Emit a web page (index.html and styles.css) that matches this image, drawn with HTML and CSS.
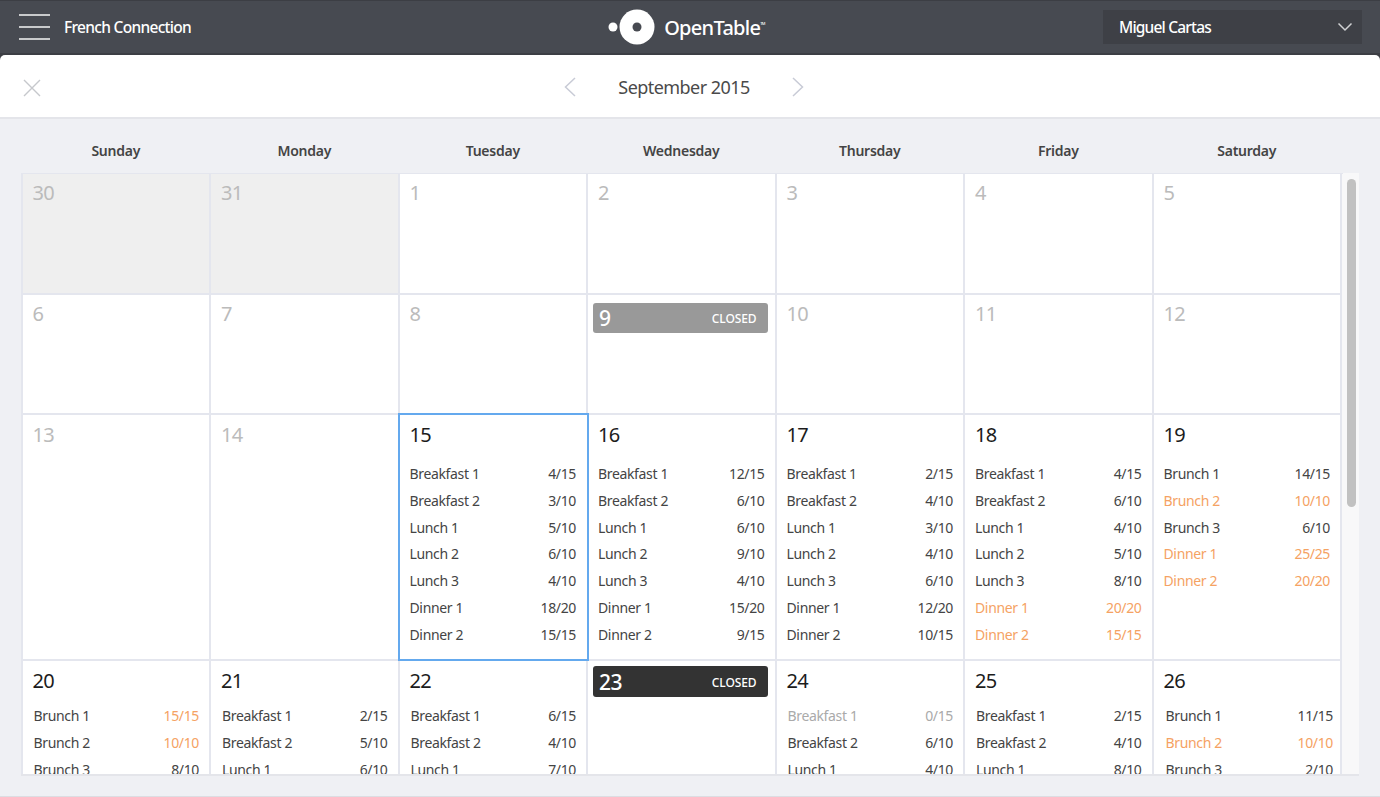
FILE: index.html
```html
<!DOCTYPE html>
<html>
<head>
    <title>French Connection - Calendar</title>
    <link rel="stylesheet" href="styles.css">
</head>
<body>
    <!-- Top bar -->
    <header class="topbar">
        <div class="topbar-left">
            <div class="burger"><span></span><span></span><span></span></div>
            <span class="restaurant">French Connection</span>
        </div>
        <div class="logo">
            <svg width="50" height="36" viewBox="0 0 50 36">
                <circle cx="6" cy="18" r="4.5" fill="#fff"/>
                <circle cx="30" cy="18" r="17.5" fill="#fff"/>
                <circle cx="30" cy="18" r="4.5" fill="#474a51"/>
            </svg>
            <span class="logo-text">OpenTable<sup class="tm">TM</sup></span>
        </div>
        <div class="user-select">
            <span>Miguel Cartas</span>
            <svg width="16" height="10" viewBox="0 0 16 10"><path d="M1.5 1.5 L8 8 L14.5 1.5" fill="none" stroke="#d0d1d4" stroke-width="1.5"/></svg>
        </div>
    </header>

    <!-- Month navigation -->
    <div class="month-bar">
        <svg class="close" width="18" height="18" viewBox="0 0 18 18"><path d="M1 1 L17 17 M17 1 L1 17" fill="none" stroke="#c6c8cc" stroke-width="1.4"/></svg>
        <svg class="arrow" width="12" height="20" viewBox="0 0 12 20"><path d="M11 1 L1.5 10 L11 19" fill="none" stroke="#c8cbd6" stroke-width="1.5"/></svg>
        <span class="month-title">September 2015</span>
        <svg class="arrow" width="12" height="20" viewBox="0 0 12 20"><path d="M1 1 L10.5 10 L1 19" fill="none" stroke="#c8cbd6" stroke-width="1.5"/></svg>
    </div>

    <!-- Calendar -->
    <div class="weekdays">
        <div>Sunday</div><div>Monday</div><div>Tuesday</div><div>Wednesday</div><div>Thursday</div><div>Friday</div><div>Saturday</div>
    </div>

    <div class="calendar-wrap">
        <div class="calendar">
            <div class="cell other"><div class="num muted">30</div></div>
            <div class="cell other"><div class="num muted">31</div></div>
            <div class="cell"><div class="num muted">1</div></div>
            <div class="cell"><div class="num muted">2</div></div>
            <div class="cell"><div class="num muted">3</div></div>
            <div class="cell"><div class="num muted">4</div></div>
            <div class="cell"><div class="num muted">5</div></div>

            <div class="cell"><div class="num muted">6</div></div>
            <div class="cell"><div class="num muted">7</div></div>
            <div class="cell"><div class="num muted">8</div></div>
            <div class="cell"><div class="closed grey"><span>9</span><small>CLOSED</small></div></div>
            <div class="cell"><div class="num muted">10</div></div>
            <div class="cell"><div class="num muted">11</div></div>
            <div class="cell"><div class="num muted">12</div></div>

            <div class="cell"><div class="num muted">13</div></div>
            <div class="cell"><div class="num muted">14</div></div>
            <div class="cell selected">
                <div class="num">15</div>
                <ul class="shifts">
                    <li><span>Breakfast 1</span><span>4/15</span></li>
                    <li><span>Breakfast 2</span><span>3/10</span></li>
                    <li><span>Lunch 1</span><span>5/10</span></li>
                    <li><span>Lunch 2</span><span>6/10</span></li>
                    <li><span>Lunch 3</span><span>4/10</span></li>
                    <li><span>Dinner 1</span><span>18/20</span></li>
                    <li><span>Dinner 2</span><span>15/15</span></li>
                </ul>
            </div>
            <div class="cell">
                <div class="num">16</div>
                <ul class="shifts">
                    <li><span>Breakfast 1</span><span>12/15</span></li>
                    <li><span>Breakfast 2</span><span>6/10</span></li>
                    <li><span>Lunch 1</span><span>6/10</span></li>
                    <li><span>Lunch 2</span><span>9/10</span></li>
                    <li><span>Lunch 3</span><span>4/10</span></li>
                    <li><span>Dinner 1</span><span>15/20</span></li>
                    <li><span>Dinner 2</span><span>9/15</span></li>
                </ul>
            </div>
            <div class="cell">
                <div class="num">17</div>
                <ul class="shifts">
                    <li><span>Breakfast 1</span><span>2/15</span></li>
                    <li><span>Breakfast 2</span><span>4/10</span></li>
                    <li><span>Lunch 1</span><span>3/10</span></li>
                    <li><span>Lunch 2</span><span>4/10</span></li>
                    <li><span>Lunch 3</span><span>6/10</span></li>
                    <li><span>Dinner 1</span><span>12/20</span></li>
                    <li><span>Dinner 2</span><span>10/15</span></li>
                </ul>
            </div>
            <div class="cell">
                <div class="num">18</div>
                <ul class="shifts">
                    <li><span>Breakfast 1</span><span>4/15</span></li>
                    <li><span>Breakfast 2</span><span>6/10</span></li>
                    <li><span>Lunch 1</span><span>4/10</span></li>
                    <li><span>Lunch 2</span><span>5/10</span></li>
                    <li><span>Lunch 3</span><span>8/10</span></li>
                    <li class="full"><span>Dinner 1</span><span>20/20</span></li>
                    <li class="full"><span>Dinner 2</span><span>15/15</span></li>
                </ul>
            </div>
            <div class="cell">
                <div class="num">19</div>
                <ul class="shifts">
                    <li><span>Brunch 1</span><span>14/15</span></li>
                    <li class="full"><span>Brunch 2</span><span>10/10</span></li>
                    <li><span>Brunch 3</span><span>6/10</span></li>
                    <li class="full"><span>Dinner 1</span><span>25/25</span></li>
                    <li class="full"><span>Dinner 2</span><span>20/20</span></li>
                </ul>
            </div>

            <div class="cell last-row">
                <div class="num">20</div>
                <ul class="shifts">
                    <li><span>Brunch 1</span><span class="full">15/15</span></li>
                    <li><span>Brunch 2</span><span class="full">10/10</span></li>
                    <li><span>Brunch 3</span><span>8/10</span></li>
                </ul>
            </div>
            <div class="cell last-row">
                <div class="num">21</div>
                <ul class="shifts">
                    <li><span>Breakfast 1</span><span>2/15</span></li>
                    <li><span>Breakfast 2</span><span>5/10</span></li>
                    <li><span>Lunch 1</span><span>6/10</span></li>
                </ul>
            </div>
            <div class="cell last-row">
                <div class="num">22</div>
                <ul class="shifts">
                    <li><span>Breakfast 1</span><span>6/15</span></li>
                    <li><span>Breakfast 2</span><span>4/10</span></li>
                    <li><span>Lunch 1</span><span>7/10</span></li>
                </ul>
            </div>
            <div class="cell last-row"><div class="closed dark"><span>23</span><small>CLOSED</small></div></div>
            <div class="cell last-row">
                <div class="num">24</div>
                <ul class="shifts">
                    <li class="empty"><span>Breakfast 1</span><span>0/15</span></li>
                    <li><span>Breakfast 2</span><span>6/10</span></li>
                    <li><span>Lunch 1</span><span>4/10</span></li>
                </ul>
            </div>
            <div class="cell last-row">
                <div class="num">25</div>
                <ul class="shifts">
                    <li><span>Breakfast 1</span><span>2/15</span></li>
                    <li><span>Breakfast 2</span><span>4/10</span></li>
                    <li><span>Lunch 1</span><span>8/10</span></li>
                </ul>
            </div>
            <div class="cell last-row wide">
                <div class="num">26</div>
                <ul class="shifts">
                    <li><span>Brunch 1</span><span>11/15</span></li>
                    <li class="full"><span>Brunch 2</span><span>10/10</span></li>
                    <li><span>Brunch 3</span><span>2/10</span></li>
                </ul>
            </div>
        </div>
        <div class="scrollbar"><div class="thumb"></div></div>
    </div>
</body>
</html>
```

FILE: styles.css
```css
* {
    box-sizing: border-box;
}

html, body {
    height: 100%;
}

body {
    margin: 0;
    overflow: hidden;
    font-family: "Noto Sans", Arial, sans-serif;
    /* dark strip shows behind the rounded corners of the month bar */
    background: linear-gradient(#3c3e44 60px, #eff0f4 60px);
    border-bottom: 1px solid #dcdde2;
    color: #444;
}

/* Top bar */
.topbar {
    display: flex;
    align-items: center;
    justify-content: space-between;
    height: 55px;
    padding: 0 18px 0 19px;
    background-color: #474a51;
    border-top: 1px solid #3c3e44;
    border-bottom: 2px solid #3c3e44;
    color: #fff;
}

.topbar-left {
    display: flex;
    align-items: center;
    gap: 14px;
    width: 259px;
}

.burger {
    display: flex;
    flex-direction: column;
    gap: 10px;
    width: 31px;
}

.burger span {
    display: block;
    height: 2px;
    background-color: #c9cacc;
}

.restaurant {
    font-size: 15.5px;
    font-weight: 500;
    letter-spacing: -0.7px;
}

.logo {
    display: flex;
    align-items: center;
    gap: 7px;
    margin-right: 9px;
}

.logo-text {
    font-size: 20px;
    font-weight: 500;
    letter-spacing: -0.7px;
}

.tm {
    font-size: 4px;
    vertical-align: 10px;
}

.user-select {
    display: flex;
    align-items: center;
    justify-content: space-between;
    width: 259px;
    height: 34px;
    padding: 0 9px 0 16px;
    background-color: #3e4046;
    font-size: 15.5px;
    font-weight: 500;
    letter-spacing: -0.8px;
}

/* Month navigation */
.month-bar {
    position: relative;
    display: flex;
    align-items: center;
    justify-content: center;
    gap: 42px;
    height: 64px;
    padding: 2px 12px 0 0;
    background-color: #fff;
    border-bottom: 2px solid #e4e5ea;
    border-radius: 5px 5px 0 0;
}

.close {
    position: absolute;
    left: 23px;
    top: 24px;
}

.month-title {
    font-size: 18px;
    letter-spacing: -0.55px;
    color: #4a4a4a;
}

/* Calendar */
.weekdays {
    display: grid;
    grid-template-columns: repeat(7, 188.5px);
    height: 54px;
    padding-top: 9px;
    margin-left: 21.5px;
    align-items: center;
    font-size: 14px;
    font-weight: 600;
    letter-spacing: -0.25px;
    text-align: center;
    color: #444;
}

.calendar-wrap {
    position: relative;
    width: 1338px;
    height: 603px;
    margin-left: 20.5px;
    overflow: hidden;
    background-color: #f8f8f9;
    border-bottom: 2px solid #e4e5ea;
}

.calendar {
    display: grid;
    grid-template-columns: repeat(7, 188.5px);
    grid-template-rows: 120.5px 120.5px 246px 130px;
    width: 1322px;
    border-top: 1px solid #e4e6ee;
    border-left: 2px solid #e4e6ee;
}

.cell {
    padding: 7px 10px;
    background-color: #fff;
    border-right: 2px solid #e4e6ee;
    border-bottom: 2px solid #e4e6ee;
}

/* first two rows sit a pixel higher */
.cell:nth-child(-n+14) {
    padding-top: 6px;
}

.cell.other {
    background-color: #efefef;
}

.cell.selected {
    position: relative;
    margin: -2px -1px 0 -2px;
    padding-right: 11px;
    border: 2px solid #64a9ee;
}

.num {
    height: 26px;
    font-size: 20px;
    line-height: 26px;
    letter-spacing: -0.6px;
    color: #1c1c1c;
}

.num.muted {
    color: #bbb;
}

.closed {
    display: flex;
    align-items: center;
    justify-content: space-between;
    height: 30px;
    margin: 2px -3px 0 -5px;
    padding: 1px 11px 0 6px;
    border-radius: 3px;
    color: #fff;
    font-size: 21px;
    font-weight: 500;
    letter-spacing: -0.5px;
}

.closed small {
    font-size: 12px;
    letter-spacing: -0.1px;
}

.closed.grey {
    background-color: #999;
}

.closed.dark {
    height: 31px;
    margin-top: -2px;
    background-color: #333;
}

.shifts {
    list-style: none;
    margin: 13px 0 0;
    padding: 0;
    font-size: 14px;
    letter-spacing: -0.35px;
}

.shifts li {
    display: flex;
    justify-content: space-between;
    height: 26.8px;
    line-height: 26.8px;
}

.full {
    color: #f5a263;
}

.empty {
    color: #aaa;
}

.last-row .shifts {
    margin-top: 9px;
    padding-left: 1px;
}

.wide .shifts {
    margin-right: -3px;
    padding-left: 2px;
}

.scrollbar {
    position: absolute;
    top: 1px;
    right: 0;
    width: 15px;
    height: 100%;
    background-color: #f8f8f9;
}

.thumb {
    width: 9px;
    height: 328px;
    margin: 5px 0 0 3px;
    background-color: #c1c1c1;
    border-radius: 5px;
}
```
